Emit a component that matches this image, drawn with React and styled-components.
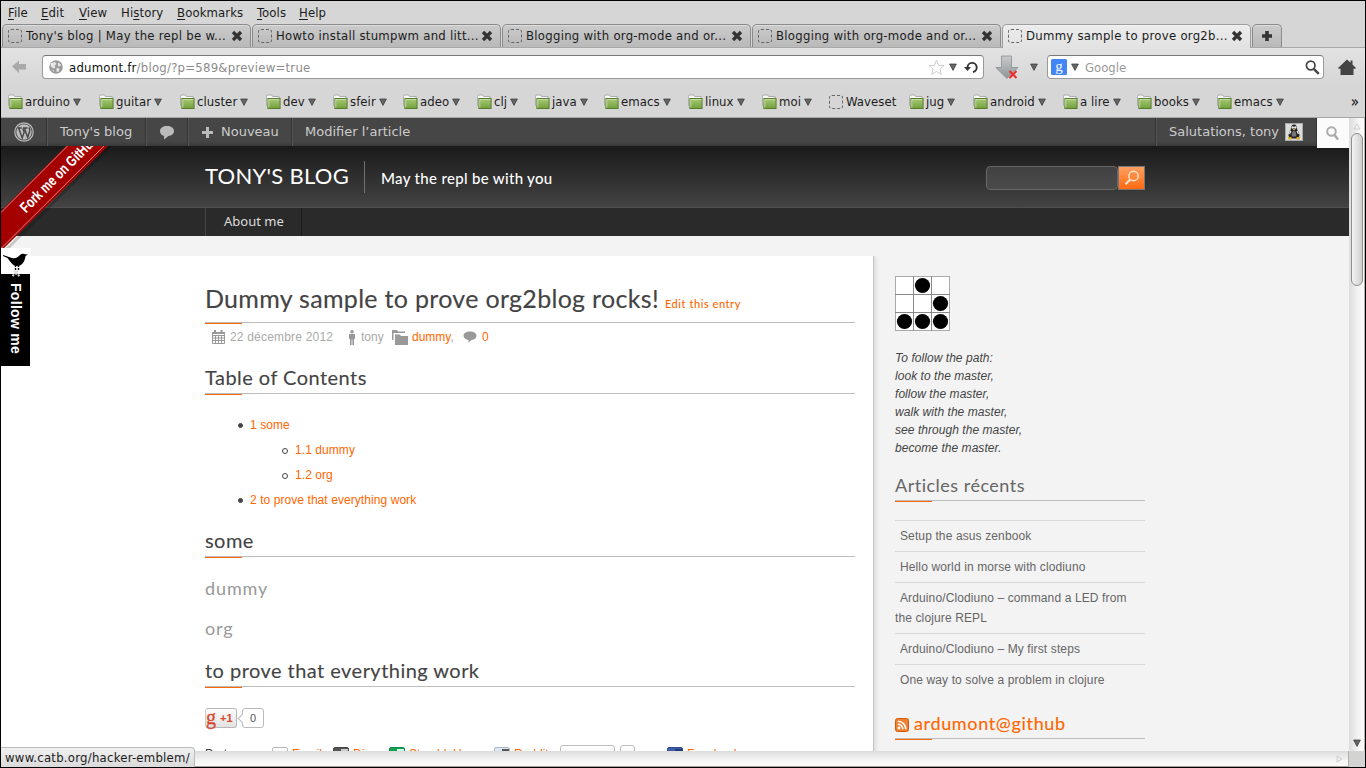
import React from 'react';
import styled, { createGlobalStyle, css } from 'styled-components';

const Global = createGlobalStyle`
  *, *::before, *::after { box-sizing: border-box; }
  body { margin: 0; background: #000; font-family: "DejaVu Sans", sans-serif; }
  h1, h2, h3, p, ul { margin: 0; padding: 0; font-weight: 400; }
  ul { list-style: none; }
  svg { display: block; flex: none; }
`;

const chromeFont = css`
  font-family: "DejaVu Sans Condensed", "DejaVu Sans", sans-serif;
  font-stretch: condensed;
  font-size: 13px;
  color: #1c1c1c;
  white-space: nowrap;
`;

const Window = styled.div`
  position: relative;
  width: 1366px;
  height: 768px;
  padding: 1px;
  background: #000;
  overflow: hidden;
  display: flex;
  flex-direction: column;
`;

/* ---------- browser chrome ---------- */
const MenuBar = styled.div`
  ${chromeFont}
  height: 23px;
  flex: none;
  background: #d6d6d6;
  padding-left: 7px;
  display: flex;
  line-height: 23px;
`;
const MenuItem = styled.span`
  width: ${(p) => p.$w}px;
  letter-spacing: 0.1px;
  u { text-underline-offset: 2px; text-decoration-thickness: 1px; }
`;
const TabBar = styled.div`
  ${chromeFont}
  height: 24px;
  flex: none;
  background: #d6d6d6;
  border-bottom: 1px solid #a8a8a8;
  padding-left: 1px;
  display: flex;
  align-items: flex-start;
`;
const Tab = styled.div`
  width: 249px;
  margin-right: 1px;
  height: ${(p) => (p.$active ? 24 : 23)}px;
  border: 1px solid ${(p) => (p.$active ? '#9d9d9d' : '#8b8b8b')};
  border-bottom: 0;
  border-radius: 5px 5px 0 0;
  background: ${(p) => (p.$active ? 'linear-gradient(#ececec, #e2e2e2)' : 'linear-gradient(#cbcbcb, #b9b9b9)')};
  box-shadow: inset 0 1px 0 rgba(255, 255, 255, 0.35);
  padding: 0 1px ${(p) => (p.$active ? 1 : 0)}px 5px;
  display: flex;
  align-items: center;
`;
const TabTitle = styled.span`
  width: 209px;
  flex: none;
  padding-left: 4px;
  line-height: 22px;
  letter-spacing: 0.27px;
`;
const NewTab = styled(Tab)`
  width: 30px;
  padding: 0;
  justify-content: center;
`;
const Blank = styled.span`
  width: 14px;
  height: 14px;
  flex: none;
  border: 1px dashed #666;
  border-radius: 3px;
`;
const NavBar = styled.div`
  ${chromeFont}
  height: 38px;
  flex: none;
  background: linear-gradient(#e2e2e2, #d6d6d6);
  display: flex;
  align-items: center;
  padding: 0 8px 0 10px;
`;
const Field = styled.div`
  width: ${(p) => p.$w}px;
  height: 24px;
  margin-left: ${(p) => p.$ml}px;
  border: 1px solid #9a9a9a;
  border-top-color: #777;
  border-radius: 4px;
  background: #fff;
  padding: 0 ${(p) => p.$pr}px 0 ${(p) => p.$pl}px;
  display: flex;
  align-items: center;
`;
const Url = styled.span`
  flex: 1;
  padding-left: 6px;
  color: #8b8b8b;
  letter-spacing: 0.24px;
  b { font-weight: 400; color: #111; }
`;
const Placeholder = styled.span`
  flex: 1;
  padding-left: 6px;
  color: #9a9a9a;
`;
const Gap = styled.span`
  width: ${(p) => p.$w}px;
  flex: none;
`;
const Bookmarks = styled.div`
  ${chromeFont}
  height: 32px;
  flex: none;
  background: #d6d6d6;
  border-bottom: 1px solid #a5a5a5;
  padding-left: 7px;
  display: flex;
  align-items: center;
`;
const Bookmark = styled.div`
  width: ${(p) => p.$w}px;
  flex: none;
  display: flex;
  align-items: center;
  gap: 2px;
  letter-spacing: 0.07px;
  span + svg { margin-left: 1px; }
  span + span { margin-left: 1px; }
`;
const More = styled.span`
  margin-left: auto;
  padding-right: 6px;
  color: #000;
  font-size: 15px;
  line-height: 18px;
`;

/* ---------- viewport ---------- */
const Viewport = styled.div`
  display: flex;
  flex: none;
  height: 633px;
  width: 1364px;
`;
const Page = styled.div`
  position: relative;
  width: 1348px;
  height: 633px;
  overflow: hidden;
  background: #f3f3f3;
`;
const VScroll = styled.div`
  width: 16px;
  border-right: 1px solid #b5b1a8;
  background: linear-gradient(90deg, #dcdcdc, #f4f4f4 60%, #fcfcfc);
  display: flex;
  flex-direction: column;
  align-items: center;
  justify-content: space-between;
  padding: 5px 0 4px 1px;
`;
const Thumb = styled.div`
  width: 12px;
  height: 153px;
  margin-top: 3px;
  border: 1px solid #8e8e8e;
  border-radius: 6px;
  background: linear-gradient(90deg, #f4f4f4, #cfcfcf);
`;
const ScrollTop = styled.div`
  display: flex;
  flex-direction: column;
  align-items: center;
`;
const HScroll = styled.div`
  height: 16px;
  flex: none;
  width: 1364px;
  display: flex;
  background: #d3d3d3;
`;
const HTrack = styled.div`
  width: 1348px;
  border-right: 1px solid #b5b1a8;
  border-bottom: 1px solid #a5a199;
  background: linear-gradient(#dcdcdc, #f4f4f4 60%, #fcfcfc);
  display: flex;
  align-items: center;
  justify-content: flex-end;
  padding-right: 5px;
`;
const Status = styled.div`
  ${chromeFont}
  position: absolute;
  left: 1px;
  top: 747px;
  width: 194px;
  height: 20px;
  padding-left: 4px;
  line-height: 20px;
  letter-spacing: 0.25px;
  border-top: 1px solid #bbb;
  border-right: 1px solid #bbb;
  border-radius: 0 4px 0 0;
  background: linear-gradient(#f1f1f1, #dadada);
`;

/* ---------- admin bar ---------- */
const AdminBar = styled.div`
  height: 28px;
  background: linear-gradient(#464646, #464646 82%, #3a3a3a);
  display: flex;
  font-size: 13px;
  line-height: 28px;
  color: #ccc;
  white-space: nowrap;
`;
const AdminItem = styled.div`
  width: ${(p) => p.$w}px;
  border-right: ${(p) => (p.$plain ? '0' : '1px solid #333')};
  box-shadow: ${(p) => (p.$plain ? 'none' : '1px 0 0 #555')};
  padding-left: ${(p) => p.$pl}px;
  display: flex;
  align-items: center;
  gap: ${(p) => p.$gap || 0}px;
`;
const AdminRight = styled(AdminItem)`
  margin-left: auto;
  margin-right: 32px;
  border-left: 1px solid #333;
  box-shadow: inset 1px 0 0 #555;
`;
const AdminSearch = styled.div`
  position: absolute;
  right: 0;
  top: 0;
  width: 32px;
  height: 30px;
  background: #fbfbfb;
  display: flex;
  align-items: center;
  justify-content: center;
`;

/* ---------- blog header ---------- */
const Header = styled.header`
  height: 62px;
  border-bottom: 1px solid #505050;
  background: linear-gradient(#1a1a1a, #434343);
  padding-left: 204px;
  display: flex;
  align-items: center;
  color: #fff;
  font-family: Lato, sans-serif;
`;
const BlogName = styled.div`
  width: 160px;
  height: 32px;
  border-right: 1px solid #707070;
  font-size: 22px;
  line-height: 29px;
  letter-spacing: 0.28px;
  white-space: nowrap;
`;
const Tagline = styled.div`
  width: 621px;
  padding-left: 16px;
  font-size: 15px;
  font-weight: 500;
  white-space: nowrap;
  letter-spacing: 0.32px;
  padding-top: 2px;
`;
const SearchBox = styled.div`
  width: 132px;
  height: 24px;
  margin-top: 2px;
  border: 1px solid #666;
  border-radius: 4px;
  background: linear-gradient(#414141, #4b4b4b);
`;
const SearchButton = styled.div`
  width: 27px;
  height: 24px;
  margin-top: 2px;
  border: 1px solid #777;
  background: linear-gradient(#ff9f60, #ff6a10);
  display: flex;
  align-items: center;
  justify-content: center;
`;
const SiteNav = styled.nav`
  height: 28px;
  background: #2a2a2a;
  padding-left: 204px;
  display: flex;
`;
const NavLink = styled.div`
  width: 97px;
  border-left: 1px solid #444;
  border-right: 1px solid #1b1b1b;
  color: #ddd;
  font-family: "Noto Sans", sans-serif;
  font-size: 13px;
  line-height: 27px;
  padding-left: 18px;
  white-space: nowrap;
`;

/* ---------- body ---------- */
const Columns = styled.div`
  padding-top: 20px;
  display: flex;
`;
const Article = styled.main`
  width: 873px;
  height: 560px;
  flex: none;
  background: #fff;
  border-right: 1px solid #c4c4c4;
  box-shadow: 2px 0 4px rgba(0, 0, 0, 0.1);
  padding: 28px 18px 0 204px;
  clip-path: inset(0 -8px 0 0);
`;
const Ruled = styled.div`
  position: relative;
  border-bottom: 1px solid #bdbdbd;
  font-family: Lato, sans-serif;
  color: ${(p) => p.$color || '#444'};
  white-space: nowrap;
  &::after {
    content: '';
    position: absolute;
    left: 0;
    bottom: -2px;
    width: 37px;
    height: 1px;
    background: #ff6600;
  }
`;
const Title = styled(Ruled)`
  height: 39px;
  display: flex;
  align-items: baseline;
  gap: 6px;
  h1 { font-size: 25px; line-height: 28px; letter-spacing: 0.31px; -webkit-text-stroke: 0.15px currentColor; }
  a { color: #ff6600; font-size: 11px; font-weight: 500; letter-spacing: 0.55px; }
`;
const Heading = styled(Ruled)`
  height: 28px;
  margin-top: ${(p) => p.$mt}px;
  font-size: 20px;
  line-height: 23px;
  letter-spacing: 0.46px;
  -webkit-text-stroke: 0.12px currentColor;
`;
const SubHeading = styled.h3`
  margin-top: ${(p) => p.$mt}px;
  height: 20px;
  font: 400 18px/21px Lato, sans-serif;
  letter-spacing: 0.9px;
  color: #999;
`;
const Meta = styled.div`
  height: 28px;
  padding-left: 7px;
  display: flex;
  align-items: center;
  color: #aaa;
  font: 12px "Liberation Sans", sans-serif;
  white-space: nowrap;
  b { font-weight: 400; color: #ff6600; }
`;
const MetaItem = styled.span`
  width: ${(p) => p.$w}px;
  display: flex;
  align-items: center;
  gap: ${(p) => p.$gap}px;
  letter-spacing: ${(p) => p.$ls || 0}px;
`;
const Toc = styled.ul`
  margin-top: 19px;
  font: 12px/25px "Liberation Sans", sans-serif;
  letter-spacing: 0.07px;
  color: #ff6600;
`;
const TocItem = styled.li`
  padding-left: ${(p) => (p.$sub ? 77 : 33)}px;
  display: flex;
  align-items: center;
  gap: 7px;
  &::before {
    content: '';
    width: ${(p) => (p.$sub ? 6 : 5)}px;
    height: ${(p) => (p.$sub ? 6 : 5)}px;
    border-radius: 50%;
    border: 1px solid #444;
    background: ${(p) => (p.$sub ? 'transparent' : '#444')};
  }
`;
const PlusRow = styled.div`
  margin-top: 21px;
  height: 20px;
  display: flex;
  align-items: center;
`;
const PlusOne = styled.div`
  width: 32px;
  height: 20px;
  border: 1px solid #b8b8b8;
  border-left-color: #ccc;
  border-radius: 3px;
  background: linear-gradient(#fdfdfd, #e2e2e2);
  color: #d6492f;
  display: flex;
  align-items: center;
  gap: 4px;
  font: bold 11px "Liberation Sans", sans-serif;
  i { font: 400 20px/14px "Liberation Serif", serif; padding-bottom: 3px; -webkit-text-stroke: 0.3px currentColor; }
`;
const Bubble = styled.div`
  position: relative;
  width: 22px;
  height: 20px;
  margin-left: 5px;
  border: 1px solid #bbb;
  border-radius: 3px;
  text-align: center;
  font: 11px/18px "Liberation Sans", sans-serif;
  color: #555;
  &::before {
    content: '';
    position: absolute;
    left: -4px;
    top: 6px;
    width: 7px;
    height: 7px;
    background: #fff;
    border-left: 1px solid #bbb;
    border-bottom: 1px solid #bbb;
    transform: rotate(45deg);
  }
`;
const ShareRow = styled.div`
  margin-top: 17px;
  height: 24px;
  display: flex;
  align-items: flex-start;
  font: 12px/18px "Liberation Sans", sans-serif;
  color: #444;
  white-space: nowrap;
`;
const ShareLabel = styled.span`
  width: 67px;
`;
const ShareItem = styled.span`
  width: ${(p) => p.$w}px;
  display: flex;
  gap: 4px;
  color: #ff6600;
`;
const ShareIcon = styled.span`
  width: 16px;
  height: 16px;
  margin-top: 2px;
  border-radius: 2px;
  background: ${(p) => p.$bg};
  border: 1px solid ${(p) => p.$bd};
  span { display: block; width: 7px; height: 4px; margin: 1px 0 0 7px; background: ${(p) => p.$dot}; }
`;
const ShareButton = styled.span`
  width: ${(p) => p.$w}px;
  height: 20px;
  margin-right: ${(p) => p.$mr}px;
  border: 1px solid #bdbdbd;
  border-radius: 3px;
  background: linear-gradient(#fff, #e6e6e6);
`;

/* ---------- sidebar ---------- */
const Sidebar = styled.aside`
  width: 271px;
  padding: 20px 0 0 21px;
  font: 12px "Liberation Sans", sans-serif;
`;
const Quote = styled.p`
  margin-top: 18px;
  font-style: italic;
  line-height: 18px;
  letter-spacing: 0.05px;
  color: #444;
`;
const SideHeading = styled(Ruled)`
  width: 250px;
  height: 27px;
  margin-top: ${(p) => p.$mt}px;
  display: flex;
  align-items: center;
  gap: 5px;
  font-size: 18px;
  line-height: 24px;
  padding-bottom: 4px;
  letter-spacing: ${(p) => p.$ls}px;
  -webkit-text-stroke: ${(p) => p.$stroke || 0}px currentColor;
  svg { margin-top: 4px; }
`;
const Recent = styled.ul`
  width: 250px;
  margin-top: 19px;
  color: #666;
  line-height: 20px;
  letter-spacing: 0.12px;
`;
const RecentItem = styled.li`
  border-top: 1px solid #d9d9d9;
  padding: 5px 0;
  text-indent: 5px;
`;

/* ---------- overlays ---------- */
const Ribbon = styled.svg`
  position: absolute;
  left: 0;
  top: 28px;
`;
const Follow = styled.div`
  position: absolute;
  left: 0;
  top: 130px;
  width: 30px;
  height: 118px;
`;
const Bird = styled.div`
  height: 26px;
  background: #fff;
  svg { position: relative; }
`;
const FollowText = styled.div`
  width: 29px;
  height: 92px;
  background: #000;
  color: #fff;
  font: bold 14px/29px "Liberation Sans", sans-serif;
  letter-spacing: 0.3px;
  writing-mode: vertical-rl;
  padding-top: 9px;
  white-space: nowrap;
`;

/* ---------- icons ---------- */
const Arrow = () => (
  <svg width="8" height="8" viewBox="0 0 8 8"><path d="M.6 1h6.8L4 7.4z" fill="#666" stroke="#333" strokeWidth=".7" /></svg>
);
const Close = () => (
  <svg width="12" height="12" viewBox="0 0 12 12"><path d="M2 2l8 8M10 2l-8 8" stroke="#333" strokeWidth="3.3" /></svg>
);
const Folder = () => (
  <svg width="15" height="15" viewBox="0 0 16 15" preserveAspectRatio="none">
    <path d="M.5 12V2.500Q.5 1 2 1h4l1 1.500h7V6" fill="#f8f8f8" stroke="#aaa" />
    <defs><linearGradient id="fold" x2="0" y2="1"><stop stopColor="#a9ca79" /><stop offset="1" stopColor="#73a03b" /></linearGradient></defs>
    <rect x="2" y="4.500" width="13" height="10" fill="url(#fold)" stroke="#557d2b" />
    <path d="M3 13.500V5.500h11" fill="none" stroke="#c6dca5" />
  </svg>
);
const Emblem = () => (
  <svg width="55" height="55" viewBox="0 0 55 55">
    <rect x=".5" y=".5" width="54" height="54" fill="#fff" stroke="#aaa" />
    <path d="M18.5 0v55M36.5 0v55M0 18.5h55M0 36.5h55" stroke="#888" />
    {[[27.5, 9.5], [45.5, 27.5], [9.5, 45.5], [27.5, 45.5], [45.5, 45.5]].map(([x, y]) => <circle key={x + '-' + y} cx={x} cy={y} r="7.6" />)}
  </svg>
);

const bookmarks = [
  ['arduino', 91], ['guitar', 81], ['cluster', 86], ['dev', 67], ['sfeir', 70], ['adeo', 74], ['clj', 58],
  ['java', 69], ['emacs', 84], ['linux', 74], ['moi', 67], ['Waveset', 80], ['jug', 64], ['android', 90],
  ['a lire', 74], ['books', 80], ['emacs', 80],
];
const tabs = ["Tony's blog | May the repl be w...", 'Howto install stumpwm and litt...', 'Blogging with org-mode and or...', 'Blogging with org-mode and or...', 'Dummy sample to prove org2b...'];

export default function App() {
  return (
    <Window>
      <Global />
      <MenuBar>
        <MenuItem $w={33}><u>F</u>ile</MenuItem>
        <MenuItem $w={38}><u>E</u>dit</MenuItem>
        <MenuItem $w={42}><u>V</u>iew</MenuItem>
        <MenuItem $w={56}>Hi<u>s</u>tory</MenuItem>
        <MenuItem $w={80}><u>B</u>ookmarks</MenuItem>
        <MenuItem $w={42}><u>T</u>ools</MenuItem>
        <MenuItem $w={40}><u>H</u>elp</MenuItem>
      </MenuBar>
      <TabBar>
        {tabs.map((t, i) => (
          <Tab key={i} $active={i === 4}><Blank /><TabTitle>{t}</TabTitle><Close /></Tab>
        ))}
        <NewTab><svg width="12" height="12" viewBox="0 0 12 12"><path d="M6 1v10M1 6h10" stroke="#333" strokeWidth="3.6" /></svg></NewTab>
      </TabBar>
      <NavBar>
        <svg width="16" height="14" viewBox="0 0 16 14"><path d="M1 6.500L8 .5v3.500h7v5.500H8v3.500z" fill="#a9a9a9" /></svg>
        <Field $w={942} $ml={15} $pl={6} $pr={5}>
          <svg width="14" height="14" viewBox="0 0 14 14"><circle cx="7" cy="7" r="6.800" fill="#9b9b9b" /><path d="M2 3l4-1 1.500 2-2 1.500 1 2-2 1L1.500 6zM9 2.500l3 2-1 2-2-.5zM7.500 8l3 .5-1 3.500-2-.5zM3 9.500l2 1-.5 1.500z" fill="#e8e8e8" /></svg>
          <Url><b>adumont.fr</b>/blog/?p=589&amp;preview=true</Url>
          <svg width="17" height="17" viewBox="0 0 17 17"><path d="M8.500 1.200l2.100 5 5.400.4-4.100 3.500 1.300 5.300-4.700-2.900-4.700 2.900 1.300-5.300L1 6.600l5.400-.4z" fill="#fff" stroke="#ccc" /></svg>
          <Gap $w={4} /><Arrow /><Gap $w={7} />
          <svg width="14" height="14" viewBox="0 0 14 14"><path d="M3.500 7.500A4.600 4.600 0 1 1 9 12" fill="none" stroke="#333" strokeWidth="1.900" /><path d="M0 7h7L3.500 11z" fill="#333" /></svg>
        </Field>
        <Gap $w={11} />
        <svg width="25" height="25" viewBox="0 0 25 25"><defs><linearGradient id="dl" x2="0" y2="1"><stop stopColor="#c9cccd" /><stop offset="1" stopColor="#8c9496" /></linearGradient></defs><path d="M6.500 1h10v11.500h6.500L12 23.500.8 12.500h5.700z" fill="url(#dl)" stroke="#899093" strokeWidth=".8" /><path d="M14.500 16l7 7M21.500 16l-7 7" stroke="#ee2a24" strokeWidth="2" /></svg>
        <Gap $w={10} /><Arrow />
        <Field $w={277} $ml={9} $pl={3} $pr={3}>
          <svg width="16" height="16" viewBox="0 0 16 16"><rect width="16" height="16" rx="1.500" fill="#4285f4" /><text x="8" y="11.500" textAnchor="middle" fill="#fff" fontFamily="Liberation Serif, serif" fontSize="15">g</text></svg>
          <Gap $w={4} /><Arrow /><Placeholder>Google</Placeholder>
          <svg width="15" height="15" viewBox="0 0 15 15"><circle cx="5.700" cy="5.500" r="4.300" fill="none" stroke="#444" strokeWidth="1.700" /><path d="M8.800 8.800l5 5" stroke="#444" strokeWidth="2.400" /></svg>
        </Field>
        <Gap $w={14} />
        <svg width="18" height="17" viewBox="0 0 18 17"><path d="M9 .5l3.500 3.200V1.500h2v4l3.200 3.300v1H15.500V16h-13V9.800H.3v-1z" fill="#444" /></svg>
      </NavBar>
      <Bookmarks>
        {bookmarks.map(([name, w], i) => (
          <Bookmark key={i} $w={w}>
            {name === 'Waveset' ? <Blank /> : <Folder />}
            <span>{name}</span>
            {name !== 'Waveset' && <Arrow />}
          </Bookmark>
        ))}
        <More>»</More>
      </Bookmarks>

      <Viewport>
        <Page>
          <AdminBar>
            <AdminItem $w={46} $pl={13}>
              <svg width="20" height="20" viewBox="0 0 20 20"><circle cx="10" cy="10" r="9.200" fill="none" stroke="#bbb" strokeWidth="1.200" /><circle cx="10" cy="10" r="7.700" fill="#bbb" /><path d="M3.800 6h4M9 6h4.500M4.800 6.500l3.400 9.500 2-5.800L8.800 6.500M10.500 6.500l3.200 9 2-6.500q.4-2-.9-3.500" fill="none" stroke="#464646" strokeWidth="1.400" /></svg>
            </AdminItem>
            <AdminItem $w={99} $pl={13}>Tony's blog</AdminItem>
            <AdminItem $w={42} $pl={13}>
              <svg width="16" height="15" viewBox="0 0 16 15"><path d="M8 1c4 0 7 2 7 5s-2.500 4.800-5.500 5L5 14.500V11C2.500 10.300 1 8.500 1 6c0-3 3-5 7-5z" fill="#bbb" /></svg>
            </AdminItem>
            <AdminItem $w={104} $pl={14} $gap={8}>
              <svg width="11" height="11" viewBox="0 0 11 11"><path d="M5.500 0v11M0 5.500h11" stroke="#bbb" strokeWidth="3" /></svg>Nouveau
            </AdminItem>
            <AdminItem $w={140} $pl={13} $plain>Modifier l’article</AdminItem>
            <AdminRight $w={162} $pl={13} $gap={6}>
              Salutations, tony
              <svg width="18" height="18" viewBox="0 0 18 18"><rect x=".5" y=".5" width="17" height="17" fill="#ddd" stroke="#aaa" /><path d="M9 1.500c2.500 0 3 2 3.200 5 .8 2 2.500 3.500 2.300 6.500l-2 2.500h-7l-2-2.500c0-3 1.500-4.500 2.300-6.500.2-3 .7-5 3.200-5z" fill="#222" /><path d="M9 7.500c2 1 2.700 3 2.200 6H6.800C6.300 10.500 7 8.500 9 7.500z" fill="#777" /><circle cx="7.700" cy="4.500" r="1.200" fill="#eee" /><circle cx="10.300" cy="4.500" r="1.200" fill="#eee" /><path d="M6 8l-1.500 3M12 8l1.500 3" stroke="#eee" strokeWidth="1.200" /><path d="M7.500 6h3L9 7.600zM2.500 14h4v2.500h-3zM11.500 14h4l-1 2.500h-3z" fill="#e0b020" /></svg>
            </AdminRight>
          </AdminBar>
          <Header>
            <BlogName>TONY'S BLOG</BlogName>
            <Tagline>May the repl be with you</Tagline>
            <SearchBox />
            <SearchButton><svg width="16" height="16" viewBox="0 0 16 16"><circle cx="9.500" cy="6" r="4.700" fill="none" stroke="#ffe3cf" strokeWidth="1.500" /><path d="M6 9.700L1.500 14.200" stroke="#ffe3cf" strokeWidth="2.200" /></svg></SearchButton>
          </Header>
          <SiteNav><NavLink>About me</NavLink></SiteNav>
          <Columns>
            <Article>
              <Title><h1>Dummy sample to prove org2blog rocks!</h1><a>Edit this entry</a></Title>
              <Meta>
                <MetaItem $w={136} $gap={5} $ls={0.19}>
                  <svg width="13" height="14" viewBox="0 0 13 14"><path d="M.5 2.500h12v11H.5zM.5 5.500h12M.5 8h12M.5 10.500h12M3.500 5v8M6.500 5v8M9.500 5v8" fill="none" stroke="#999" /><path d="M0 2h13v2H0zM2 0h2v3H2zM8.500 0h2v3h-2z" fill="#999" /></svg>
                  22 décembre 2012
                </MetaItem>
                <MetaItem $w={44} $gap={5}>
                  <svg width="8" height="15" viewBox="0 0 8 15"><circle cx="4" cy="1.800" r="1.800" fill="#999" /><path d="M1 4h6v5H6v6H4.400V9.500h-.8V15H2V9H1z" fill="#999" /></svg>
                  tony
                </MetaItem>
                <MetaItem $w={71} $gap={4}>
                  <svg width="16" height="15" viewBox="0 0 16 15"><path d="M0 0h5l1 1.500h7V3H1.500v7H0zM3 4.500h5L9 6h7v9H3z" fill="#999" /></svg>
                  <span><b>dummy</b>,</span>
                </MetaItem>
                <MetaItem $w={40} $gap={5}>
                  <svg width="14" height="12" viewBox="0 0 14 12"><path d="M7 .5c4 0 6.500 1.800 6.500 4.300 0 2.300-2 4-5 4.300L5.500 11.800V9C2.500 8.500.5 7 .5 4.800.5 2.300 3 .5 7 .5z" fill="#999" /></svg>
                  <b>0</b>
                </MetaItem>
              </Meta>
              <Heading as="h2" $mt={15}>Table of Contents</Heading>
              <Toc>
                <TocItem>1 some</TocItem>
                <TocItem $sub>1.1 dummy</TocItem>
                <TocItem $sub>1.2 org</TocItem>
                <TocItem>2 to prove that everything work</TocItem>
              </Toc>
              <Heading as="h2" $mt={16}>some</Heading>
              <SubHeading $mt={21}>dummy</SubHeading>
              <SubHeading $mt={20}>org</SubHeading>
              <Heading as="h2" $mt={21}>to prove that everything work</Heading>
              <PlusRow><PlusOne><i>g</i>+1</PlusOne><Bubble>0</Bubble></PlusRow>
              <ShareRow>
                <ShareLabel>Partagez :</ShareLabel>
                <ShareItem $w={61}><ShareIcon $bg="#fff" $bd="#bbb" />Email</ShareItem>
                <ShareItem $w={56}><ShareIcon $bg="#555" $bd="#444" $dot="#ccc"><span /></ShareIcon>Digg</ShareItem>
                <ShareItem $w={105}><ShareIcon $bg="#14a04c" $bd="#0c8a50" $dot="#cfe"><span /></ShareIcon>StumbleUpon</ShareItem>
                <ShareItem $w={66}><ShareIcon $bg="#dbe6f4" $bd="#a9b6c8" $dot="#555"><span /></ShareIcon>Reddit</ShareItem>
                <ShareButton $w={55} $mr={5} />
                <ShareButton $w={15} $mr={32} />
                <ShareItem $w={90}><ShareIcon $bg="#3c5fa8" $bd="#2c4a8a" $dot="#223b78"><span /></ShareIcon>Facebook</ShareItem>
              </ShareRow>
            </Article>
            <Sidebar>
              <Emblem />
              <Quote>To follow the path:<br />look to the master,<br />follow the master,<br />walk with the master,<br />see through the master,<br />become the master.</Quote>
              <SideHeading as="h2" $mt={17} $color="#666" $ls={0.5}>Articles récents</SideHeading>
              <Recent>
                <RecentItem>Setup the asus zenbook</RecentItem>
                <RecentItem>Hello world in morse with clodiuno</RecentItem>
                <RecentItem>Arduino/Clodiuno – command a LED from the clojure REPL</RecentItem>
                <RecentItem>Arduino/Clodiuno – My first steps</RecentItem>
                <RecentItem>One way to solve a problem in clojure</RecentItem>
              </Recent>
              <SideHeading as="h2" $mt={17} $color="#ff6600" $ls={0.65} $stroke={0.15}>
                <svg width="14" height="14" viewBox="0 0 14 14"><rect x=".5" y=".5" width="13" height="13" rx="2" fill="#f08030" stroke="#d05a10" /><circle cx="4" cy="10" r="1.400" fill="#fff" /><path d="M2.800 6.200a5 5 0 0 1 5 5M2.800 3.200a8 8 0 0 1 8 8" fill="none" stroke="#fff" strokeWidth="1.600" /></svg>
                ardumont@github
              </SideHeading>
            </Sidebar>
          </Columns>

          <AdminSearch><svg width="14" height="15" viewBox="0 0 14 15"><circle cx="5.500" cy="5.500" r="4.300" fill="none" stroke="#aaa" strokeWidth="2" /><path d="M8.500 9l3.500 4.500" stroke="#aaa" strokeWidth="2.500" /></svg></AdminSearch>
          <Ribbon width="112" height="108" viewBox="0 0 112 108">
            <path d="M0 107L107 0h4L0 111z" fill="#000" opacity=".18" />
            <path d="M0 65L65 0h42L0 105z" fill="#a40000" />
            <path d="M0 66.500L66.500 0M0 102.500L103 0" stroke="#d88080" strokeWidth="1" />
            <text transform="translate(25 67.500) rotate(-45)" fill="#fff" fontFamily="Liberation Sans Narrow, Liberation Sans, sans-serif" fontWeight="bold" fontSize="15" textLength="103" lengthAdjust="spacingAndGlyphs">Fork me on GitHub</text>
          </Ribbon>
          <Follow>
            <Bird><svg width="30" height="30" viewBox="0 0 30 30"><path d="M2 7l9 3c3 .8 5 0 8-3 1.500-1.600 4-1.600 5-.8l3 .4-2.500 1.300c-.5 5-3 9.500-8 10-5 .3-7.500-5-10-8l-4.500-2z" fill="#000" /><path d="M14.500 17v6M17.500 17v5" stroke="#000" strokeWidth="1.400" strokeDasharray="2 1" /><path d="M11.500 28l6-6M13 23l6 5.500" stroke="#ddd" strokeWidth="2" strokeDasharray="2 .7" /></svg></Bird>
            <FollowText>Follow me</FollowText>
          </Follow>
        </Page>
        <VScroll>
          <ScrollTop>
            <svg width="8" height="7" viewBox="0 0 8 7"><path d="M1 6h6L4 1z" fill="none" stroke="#ccc" /></svg>
            <Thumb />
          </ScrollTop>
          <Arrow />
        </VScroll>
      </Viewport>
      <HScroll><HTrack><svg width="7" height="8" viewBox="0 0 7 8"><path d="M1 1v6l5-3z" fill="none" stroke="#ccc" /></svg></HTrack></HScroll>
      <Status>www.catb.org/hacker-emblem/</Status>
    </Window>
  );
}
